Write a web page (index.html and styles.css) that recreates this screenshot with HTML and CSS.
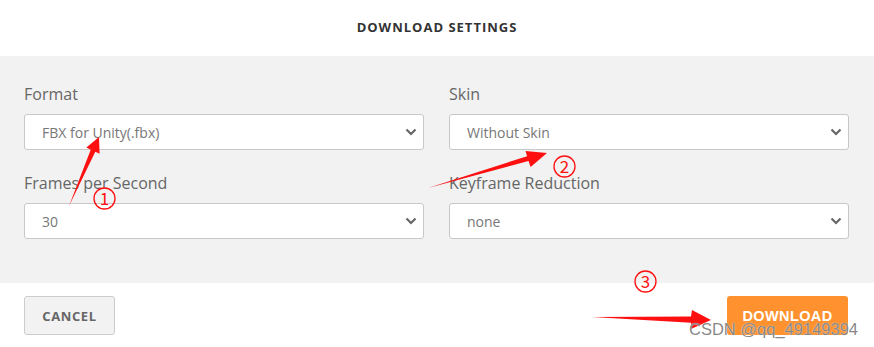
FILE: index.html
```html
<!DOCTYPE html>
<html lang="en">
<head>
    <meta charset="UTF-8">
    <meta name="viewport" content="width=device-width, initial-scale=1.0">
    <title>Download Settings</title>
    <link rel="stylesheet" href="styles.css">
</head>
<body>
    <div class="dialog">
        <div class="dialog-title">DOWNLOAD SETTINGS</div>

        <div class="settings">
            <div class="field">
                <label>Format</label>
                <div class="select">
                    <span>FBX for Unity(.fbx)</span>
                    <svg class="chevron" width="12" height="8" viewBox="0 0 12 8"><path d="M1.5 1.5 L6 6 L10.5 1.5" fill="none" stroke="#666" stroke-width="2.2"/></svg>
                </div>
            </div>
            <div class="field">
                <label>Skin</label>
                <div class="select">
                    <span>Without Skin</span>
                    <svg class="chevron" width="12" height="8" viewBox="0 0 12 8"><path d="M1.5 1.5 L6 6 L10.5 1.5" fill="none" stroke="#666" stroke-width="2.2"/></svg>
                </div>
            </div>
            <div class="field">
                <label>Frames per Second</label>
                <div class="select">
                    <span>30</span>
                    <svg class="chevron" width="12" height="8" viewBox="0 0 12 8"><path d="M1.5 1.5 L6 6 L10.5 1.5" fill="none" stroke="#666" stroke-width="2.2"/></svg>
                </div>
            </div>
            <div class="field">
                <label>Keyframe Reduction</label>
                <div class="select">
                    <span>none</span>
                    <svg class="chevron" width="12" height="8" viewBox="0 0 12 8"><path d="M1.5 1.5 L6 6 L10.5 1.5" fill="none" stroke="#666" stroke-width="2.2"/></svg>
                </div>
            </div>
        </div>

        <div class="actions">
            <button class="btn btn-cancel">CANCEL</button>
            <button class="btn btn-download">DOWNLOAD</button>
        </div>

        <!-- red markup drawn over the screenshot -->
        <svg class="annotations" width="874" height="347" viewBox="0 0 874 347">
            <g fill="#ff1010">
                <polygon points="69,206 90.7,149.8 86.4,147.6 99,137 99.6,153.8 95.3,151.8"/>
                <polygon points="428,188 527.1,156.2 525.5,150.9 547,153 530.6,167 528.5,161"/>
                <polygon points="592,317 691,316.4 692,310 711,320 691,329 691,322.8"/>
            </g>
            <g fill="none" stroke="#ff1010" stroke-width="1.3">
                <circle cx="104.5" cy="198.5" r="10.5"/>
                <circle cx="564.5" cy="166.5" r="10.5"/>
                <circle cx="645.5" cy="281.5" r="10.5"/>
            </g>
            <g class="marker-num" fill="#ff1010" text-anchor="middle">
                <text x="104.5" y="204.5">1</text>
                <text x="564.5" y="172.5">2</text>
                <text x="645.5" y="287.5">3</text>
            </g>
        </svg>

        <div class="watermark">CSDN @qq_49149394</div>
    </div>
</body>
</html>
```

FILE: styles.css
```css
/* General Styles */
body {
    margin: 0;
    padding: 0;
    background-color: #fff;
    font-family: 'Open Sans', 'Noto Sans', sans-serif;
}

.dialog {
    position: relative;
    width: 874px;
    height: 347px;
    overflow: hidden;
    background-color: #fff;
}

/* Header */
.dialog-title {
    height: 56px;
    box-sizing: border-box;
    padding-top: 17px;
    line-height: 20px;
    text-align: center;
    font-size: 13px;
    font-weight: 700;
    letter-spacing: 1px;
    color: #333;
}

/* Settings panel */
.settings {
    display: grid;
    grid-template-columns: 1fr 1fr;
    column-gap: 25px;
    row-gap: 23px;
    padding: 28px 25px 44px 24px;
    background-color: #f2f2f2;
}

.field label {
    display: block;
    margin-bottom: 10px;
    font-size: 16px;
    line-height: 20px;
    color: #666;
}

.select {
    display: flex;
    align-items: center;
    justify-content: space-between;
    height: 36px;
    box-sizing: border-box;
    padding: 0 6px 0 17px;
    background-color: #fff;
    border: 1px solid #c8c8c8;
    border-radius: 3px;
    font-size: 14px;
    color: #777;
}

.chevron {
    display: block;
}

/* Footer buttons */
.actions {
    display: flex;
    justify-content: space-between;
    padding: 13px 26px 0 24px;
}

.btn {
    height: 39px;
    box-sizing: border-box;
    border-radius: 3px;
    font-weight: 700;
    cursor: pointer;
}

.btn-cancel {
    width: 91px;
    padding: 0;
    background-color: #f2f2f2;
    border: 1px solid #ccc;
    font-family: 'Open Sans', sans-serif;
    font-size: 13px;
    letter-spacing: 0.6px;
    color: #666;
}

.btn-download {
    width: 121px;
    padding: 0;
    background-color: #ff922e;
    border: none;
    font-family: 'Liberation Sans', Arial, sans-serif;
    font-size: 14.5px;
    letter-spacing: 0.4px;
    color: #fff;
}

/* Annotations */
.annotations {
    position: absolute;
    top: 0;
    left: 0;
    pointer-events: none;
}

.marker-num {
    font-family: 'Noto Sans CJK SC', 'DejaVu Sans', sans-serif;
    font-size: 17px;
}

.watermark {
    position: absolute;
    left: 689px;
    top: 319px;
    font-family: 'Liberation Sans', Arial, sans-serif;
    font-size: 16.5px;
    line-height: 20px;
    color: rgba(120, 120, 120, 0.9);
    text-shadow: 0 0 1px #fff;
    white-space: nowrap;
}
```
